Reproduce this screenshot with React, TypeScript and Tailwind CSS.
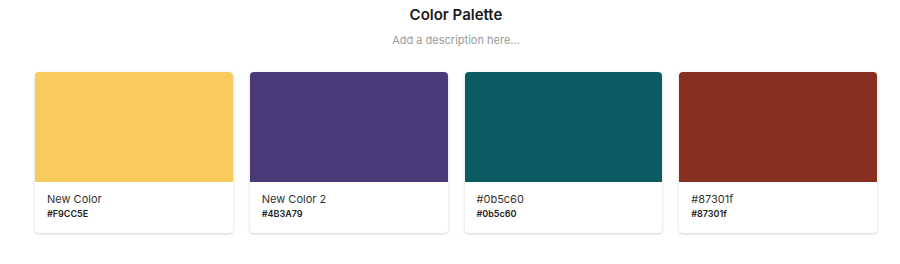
const swatches = [
  { name: "New Color", hex: "#F9CC5E", bg: "bg-[#f9cb5f]" },
  { name: "New Color 2", hex: "#4B3A79", bg: "bg-[#4b3a79]" },
  { name: "#0b5c60", hex: "#0b5c60", bg: "bg-[#0b5c60]" },
  { name: "#87301f", hex: "#87301f", bg: "bg-[#87301f]" },
];

export default function App() {
  return (
    <div className="w-[900px] h-[264px] bg-white font-['Inter',sans-serif] pl-[35px] pr-[23px] pt-[5px]">
      <div className="flex flex-col items-center">
        <h1 className="text-[15px] font-semibold text-[#1a1a1a] leading-[20px]">Color Palette</h1>
        <p className="mt-[7px] text-[11px] text-[#9a9a9a] leading-[16px]">Add a description here...</p>
      </div>
      <div className="grid grid-cols-4 gap-[17px] mt-[24px]">
        {swatches.map((s) => (
          <div key={s.name} className="rounded-[4px] bg-white shadow-[0_1px_3px_rgba(0,0,0,0.18)] overflow-hidden">
            <div className={`h-[110px] ${s.bg}`} />
            <div className="px-[12px] pt-[10px] pb-[13px]">
              <div className="text-[11px] text-[#333] leading-[14px]">{s.name}</div>
              <div className="mt-[2px] text-[9px] font-semibold text-[#222] leading-[12px]">{s.hex}</div>
            </div>
          </div>
        ))}
      </div>
    </div>
  );
}
